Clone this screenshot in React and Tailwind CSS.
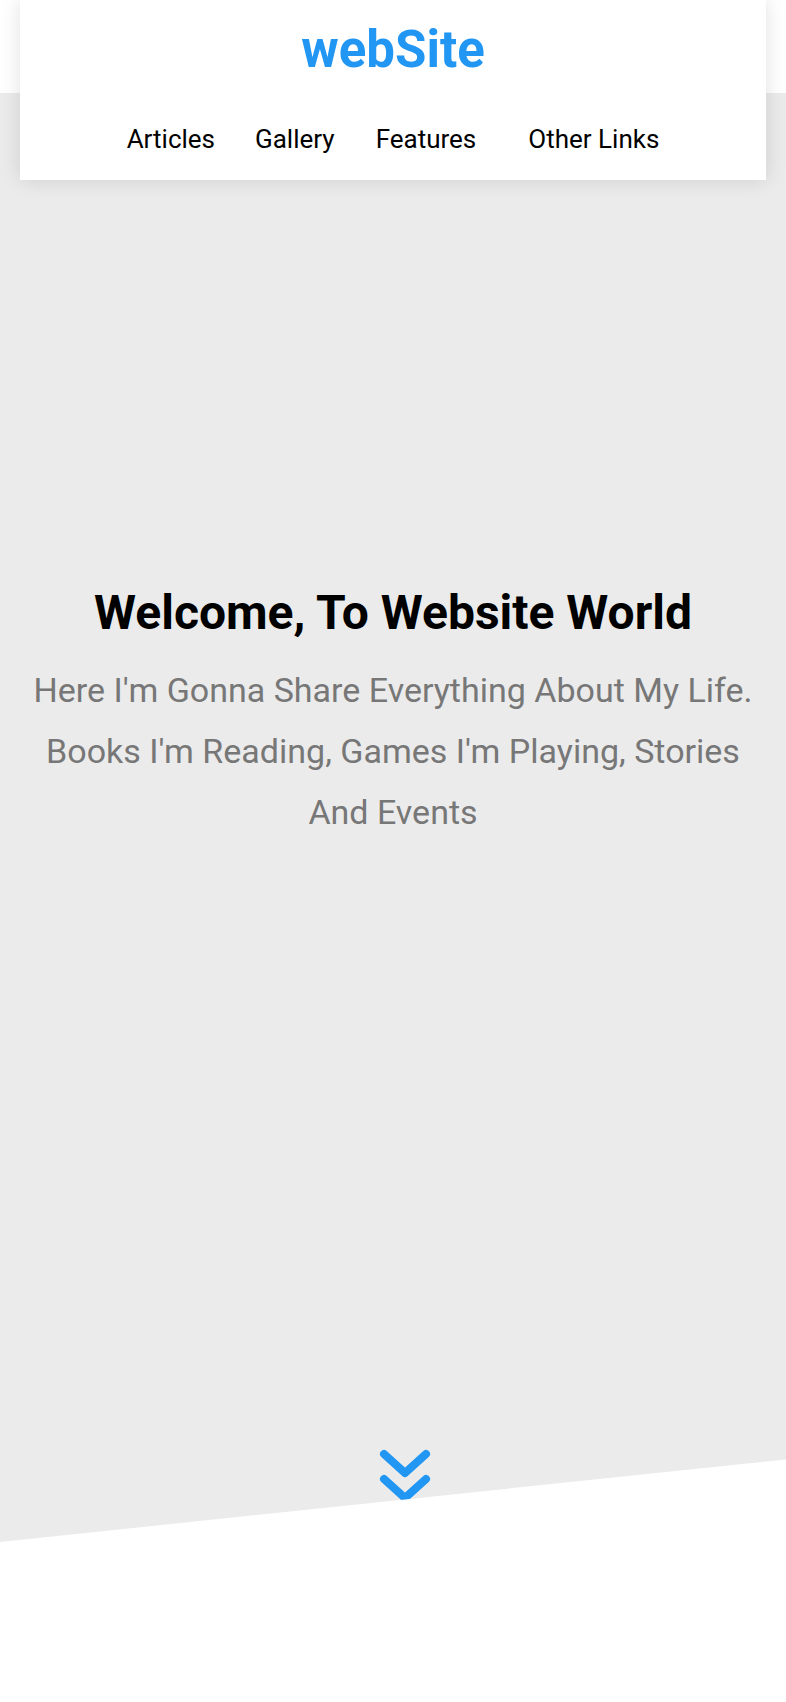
import React from 'react'

const NAV_LINKS = [
  { label: 'Articles', className: 'mr-[40px]' },
  { label: 'Gallery', className: 'mr-[41px]' },
  { label: 'Features', className: 'mr-[52px]' },
  { label: 'Other Links', className: '' },
]

function AnglesDown() {
  return (
    <svg width="56" height="62" viewBox="0 0 56 62" fill="none" aria-hidden="true">
      <path
        d="M7 6 L28 25 L49 6 M7 31 L28 50 L49 31"
        stroke="#2196f3"
        strokeWidth="8"
        strokeLinecap="round"
        strokeLinejoin="round"
      />
    </svg>
  )
}

function Header() {
  return (
    <header className="absolute top-0 left-[20px] right-[20px] z-10 h-[180px] bg-white shadow-[0_0_20px_rgba(0,0,0,0.12)] flex flex-col items-center">
      <a href="#" className="mt-[20px] text-[#2196f3] text-[51px] leading-[60px] font-bold">
        webSite
      </a>
      <nav className="mt-[42px] flex items-center">
        {NAV_LINKS.map((link) => (
          <a
            key={link.label}
            href="#"
            className={`text-[26px] leading-[34px] text-black ${link.className}`}
          >
            {link.label}
          </a>
        ))}
      </nav>
    </header>
  )
}

export default function App() {
  return (
    <div className="relative min-h-[1702px] bg-white font-['Roboto','Liberation_Sans',sans-serif]">
      <Header />
      <div className="h-[93px]" />
      <section className="h-[1449px] bg-[#ebebeb] flex flex-col items-center [clip-path:polygon(0_0,100%_0,100%_94.3%,0_100%)]">
        <div className="mt-[490px] px-[20px] text-center">
          <h1 className="text-[48px] leading-[60px] font-bold text-black">
            Welcome, To Website World
          </h1>
          <p className="mt-[17px] text-[34px] leading-[61px] text-[#777777]">
            Here I'm Gonna Share Everything About My Life. Books I'm Reading, Games I'm Playing, Stories And Events
          </p>
        </div>
        <a href="#" className="mt-auto mb-[32px] ml-[24px]">
          <AnglesDown />
        </a>
      </section>
    </div>
  )
}
